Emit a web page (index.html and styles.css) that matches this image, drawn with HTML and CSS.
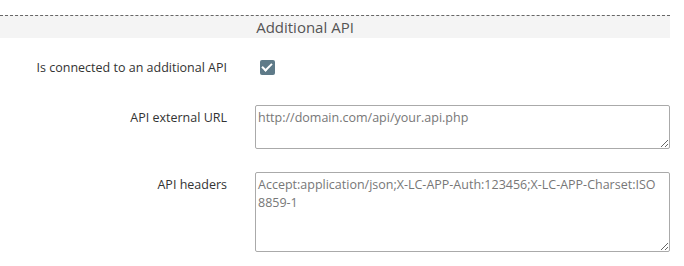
FILE: index.html
```html
<!DOCTYPE html>
<html lang="en">
<head>
  <meta charset="UTF-8" />
  <title>Additional API</title>
  <link rel="stylesheet" href="styles.css">
</head>
<body>
  <div class="form-block">
    <div class="section-title">Additional API</div>

    <div class="form-row row-check">
      <label class="form-label" for="apiEnabled">Is connected to an additional API</label>
      <div class="form-field">
        <input type="checkbox" id="apiEnabled" class="check" checked>
      </div>
    </div>

    <div class="form-row row-url">
      <label class="form-label" for="apiUrl">API external URL</label>
      <div class="form-field">
        <textarea id="apiUrl" class="field-url">http://domain.com/api/your.api.php</textarea>
      </div>
    </div>

    <div class="form-row row-headers">
      <label class="form-label" for="apiHeaders">API headers</label>
      <div class="form-field">
        <textarea id="apiHeaders" class="field-headers">Accept:application/json;X-LC-APP-Auth:123456;X-LC-APP-Charset:ISO 8859-1</textarea>
      </div>
    </div>
  </div>
</body>
</html>
```

FILE: styles.css
```css
body {
  margin: 0;
  background: #fff;
  font-family: "Open Sans", "DejaVu Sans", sans-serif;
  font-size: 12.5px;
  color: #333;
}

.form-block {
  width: 670px;
  padding-top: 15px;
}

.section-title {
  border-top: 1px dashed #666;
  background: #f4f4f4;
  height: 22px;
  line-height: 22px;
  text-align: center;
  font-size: 15px;
  color: #555;
  padding-right: 60px;
}

.form-row {
  display: grid;
  grid-template-columns: 255px 415px;
}

.row-check {
  margin-top: 22px;
}

.row-url {
  margin-top: 27px;
}

.row-headers {
  margin-top: 23px;
}

.form-label {
  text-align: right;
  padding-right: 28px;
  line-height: 20px;
  padding-top: 3px;
}

.row-check .form-label {
  padding-top: 0;
  margin-top: -2px;
}

.check {
  appearance: none;
  -webkit-appearance: none;
  margin: 0 0 0 5px;
  width: 15px;
  height: 15px;
  border-radius: 2px;
  background: #5e7a88;
  position: relative;
  display: block;
}

.check::after {
  content: "";
  position: absolute;
  left: 4px;
  top: 1px;
  width: 4px;
  height: 8px;
  border-right: 2px solid #fff;
  border-bottom: 2px solid #fff;
  transform: rotate(45deg);
}

textarea {
  display: block;
  box-sizing: border-box;
  width: 415px;
  margin: 0;
  padding: 3px 2px;
  border: 1px solid #aaa;
  border-radius: 2px;
  font-family: inherit;
  font-size: 12.5px;
  line-height: 18px;
  color: #777;
  background: #fff;
}

.field-url {
  height: 44px;
}

.field-headers {
  height: 80px;
}
```
